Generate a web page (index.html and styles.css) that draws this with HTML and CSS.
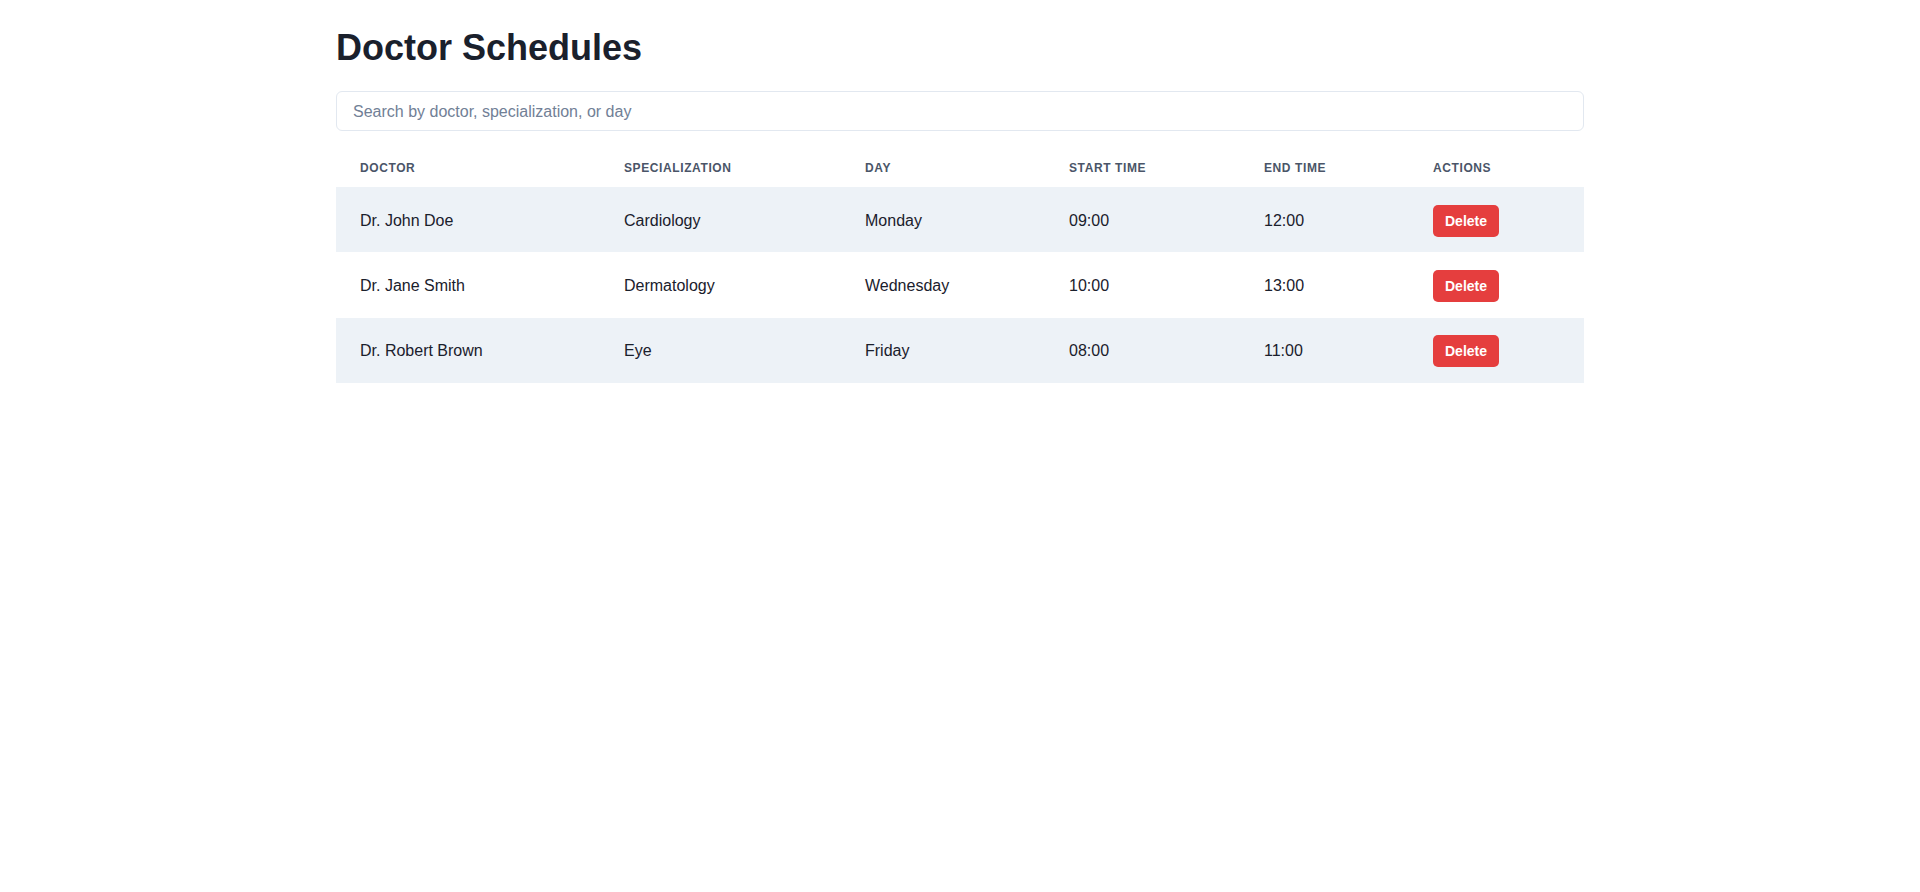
FILE: index.html
```html
<!DOCTYPE html>
<html lang="en">
<head>
<meta charset="utf-8">
<title>Doctor Schedules</title>
<link rel="stylesheet" href="styles.css">
</head>
<body>
<main class="container">
  <h1 class="title">Doctor Schedules</h1>
  <input class="search" type="text" placeholder="Search by doctor, specialization, or day">
  <table class="schedule">
    <colgroup>
      <col class="c-doctor"><col class="c-spec"><col class="c-day"><col class="c-start"><col class="c-end"><col class="c-actions">
    </colgroup>
    <thead>
      <tr>
        <th>Doctor</th>
        <th>Specialization</th>
        <th>Day</th>
        <th>Start Time</th>
        <th>End Time</th>
        <th>Actions</th>
      </tr>
    </thead>
    <tbody>
      <tr class="shaded">
        <td>Dr. John Doe</td>
        <td>Cardiology</td>
        <td>Monday</td>
        <td>09:00</td>
        <td>12:00</td>
        <td><button class="btn-delete">Delete</button></td>
      </tr>
      <tr>
        <td>Dr. Jane Smith</td>
        <td>Dermatology</td>
        <td>Wednesday</td>
        <td>10:00</td>
        <td>13:00</td>
        <td><button class="btn-delete">Delete</button></td>
      </tr>
      <tr class="shaded">
        <td>Dr. Robert Brown</td>
        <td>Eye</td>
        <td>Friday</td>
        <td>08:00</td>
        <td>11:00</td>
        <td><button class="btn-delete">Delete</button></td>
      </tr>
    </tbody>
  </table>
</main>
</body>
</html>
```

FILE: styles.css
```css
* { box-sizing: border-box; }

html, body {
  margin: 0;
  padding: 0;
  background: #ffffff;
}

body {
  font-family: "Liberation Sans", Arial, Helvetica, sans-serif;
  color: #1a202c;
}

.container {
  max-width: 1280px;
  margin: 0 auto;
  padding: 28px 16px 16px;
}

.title {
  margin: 0 0 23px;
  font-size: 36px;
  line-height: 40px;
  font-weight: 700;
  color: #1a202c;
}

.search {
  display: block;
  width: 100%;
  height: 40px;
  padding: 9px 16px 7px;
  font-family: "Liberation Sans", Arial, Helvetica, sans-serif;
  font-size: 16px;
  line-height: 22px;
  color: #1a202c;
  border: 1px solid #e2e8f0;
  border-radius: 6px;
  background: #fff;
  outline: none;
}

.search::placeholder {
  color: #718096;
}

.schedule {
  width: 100%;
  margin-top: 16px;
  border-collapse: collapse;
  table-layout: fixed;
}

.c-doctor { width: 264px; }
.c-spec { width: 241px; }
.c-day { width: 204px; }
.c-start { width: 195px; }
.c-end { width: 169px; }
.c-actions { width: 175px; }

.schedule th {
  padding: 13px 24px 11px;
  height: 40px;
  text-align: left;
  font-size: 12px;
  line-height: 16px;
  font-weight: 700;
  text-transform: uppercase;
  letter-spacing: 0.05em;
  color: #4a5568;
}

.schedule td {
  padding: 17px 24px 15px;
  height: 65.34px;
  font-size: 16px;
  line-height: 24px;
  color: #1a202c;
  vertical-align: middle;
}

.schedule tr.shaded td {
  background: #edf2f7;
}

.btn-delete {
  display: inline-block;
  height: 32px;
  padding: 6px 12px;
  border: none;
  border-radius: 5px;
  background: #e53e3e;
  color: #ffffff;
  font-family: "Liberation Sans", Arial, Helvetica, sans-serif;
  font-size: 14px;
  line-height: 20px;
  font-weight: 700;
  cursor: pointer;
}
```
